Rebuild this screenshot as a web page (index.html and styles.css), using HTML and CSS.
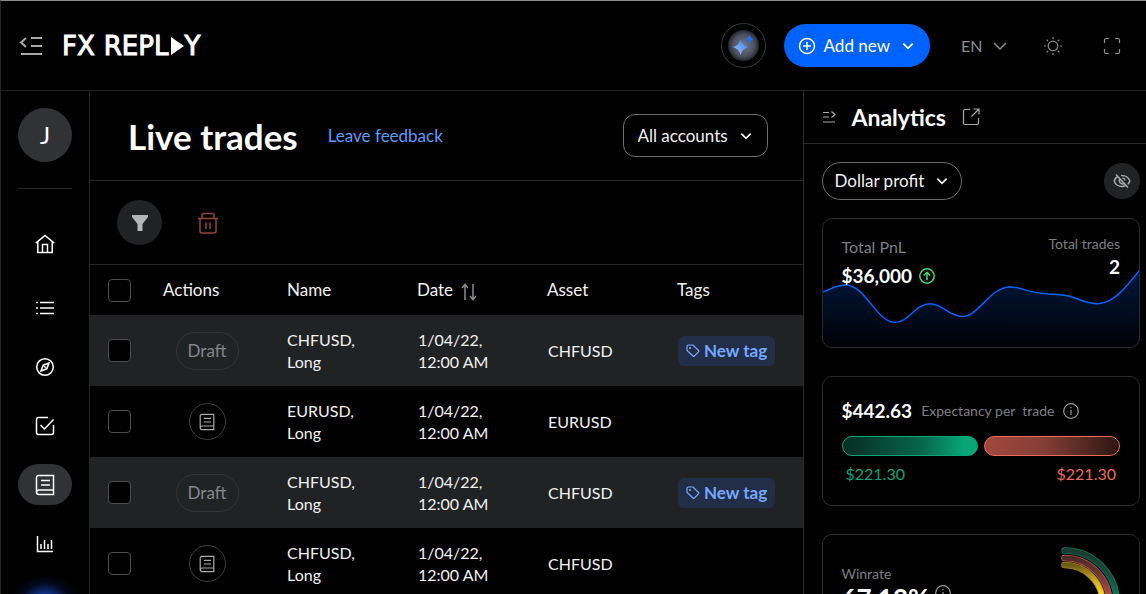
FILE: index.html
```html
<!DOCTYPE html>
<html lang="en">
<head>
    <meta charset="UTF-8">
    <meta name="viewport" content="width=device-width, initial-scale=1.0">
    <title>FX Replay - Live trades</title>
    <link rel="stylesheet" href="styles.css">
</head>
<body>
    <!-- Shared icons -->
    <svg class="sprite" aria-hidden="true">
        <symbol id="chevron" viewBox="0 0 12 12"><path d="M2 4l4 4 4-4" /></symbol>
        <symbol id="book" viewBox="0 0 20 22"><path d="M3.500 1.500h15v19H4a2.500 2.500 0 0 1-2.500-2.500V3.500a2 2 0 0 1 2-2zM1.500 18A2.500 2.500 0 0 1 4 16h14.500M6 6.500h9M6 11h9" /></symbol>
        <symbol id="tag" viewBox="0 0 14 14"><path d="M1 2.500A1.500 1.500 0 0 1 2.500 1H7l5.500 5.500a1 1 0 0 1 0 1.400L8.400 12a1 1 0 0 1-1.400 0L1 6.500z" /><circle cx="4" cy="4" r=".5" /></symbol>
        <symbol id="info" viewBox="0 0 16 16"><circle cx="8" cy="8" r="7.300" /><path d="M8 7v5M8 4v1.200" /></symbol>
    </svg>

    <div class="app">
        <header class="topbar">
            <button class="icon-btn menu-btn" aria-label="Collapse menu">
                <svg width="24" height="20" viewBox="0 0 24 20"><path d="M8 2L3 6.500l5 4.500M13 2h11M13 10h11M3 18h21" /></svg>
            </button>
            <a class="logo" href="#" aria-label="FX Replay">
                <span>FX</span>
                <span>REPL</span>
                <svg width="13" height="18" viewBox="0 0 13 18"><path d="M0 0l13 9L0 18z" /></svg>
                <span>Y</span>
            </a>
            <div class="topbar-right">
                <button class="ai-btn" aria-label="Assistant">
                    <svg width="31" height="31" viewBox="0 0 31 31">
                        <defs>
                            <radialGradient id="halo"><stop offset="0" stop-color="#737c90" /><stop offset=".7" stop-color="#4b505c" /><stop offset="1" stop-color="#23262b" /></radialGradient>
                            <linearGradient id="spark" x1="0" y1="1" x2="1" y2="0"><stop offset="0" stop-color="#a6c8ff" /><stop offset="1" stop-color="#2f7bff" /></linearGradient>
                        </defs>
                        <circle cx="15.500" cy="15.500" r="15.500" fill="url(#halo)" />
                        <path fill="url(#spark)" d="M12.500 9.500q1.500 6.500 8 7.500-6.500 1.500-8 8-1.500-6.500-8-8 6.500-1 8-7.500z" />
                        <path fill="#1f70ff" d="M21.500 4.500q.8 4 4.500 4.800-3.700.8-4.500 4.700-.8-3.900-4.500-4.700 3.700-.8 4.500-4.800z" />
                    </svg>
                </button>
                <button class="add-btn">
                    <svg width="18" height="18" viewBox="0 0 18 18"><circle cx="9" cy="9" r="7.500" /><path d="M9 5v8M5 9h8" /></svg>
                    Add new
                    <svg class="chevron" width="14" height="14"><use href="#chevron" /></svg>
                </button>
                <div class="select select-lang">
                    <select aria-label="Language"><option>EN</option></select>
                    <svg width="18" height="18"><use href="#chevron" /></svg>
                </div>
                <button class="icon-btn sun-btn" aria-label="Theme">
                    <svg width="20" height="20" viewBox="0 0 20 20"><circle cx="10" cy="10" r="4.800" /><path d="M10 1v2M10 17v2M1 10h2M17 10h2M3.600 3.600l1.400 1.400M15 15l1.400 1.400M3.600 16.400L5 15M15 5l1.400-1.400" /></svg>
                </button>
                <button class="icon-btn full-btn" aria-label="Full screen">
                    <svg width="18" height="18" viewBox="0 0 18 18"><path d="M6 1.500H3A1.500 1.500 0 0 0 1.500 3v3M12 1.500h3A1.500 1.500 0 0 1 16.500 3v3M16.500 12v3a1.500 1.500 0 0 1-1.500 1.500h-3M6 16.500H3A1.500 1.500 0 0 1 1.500 15v-3" /></svg>
                </button>
            </div>
        </header>

        <div class="content">
            <nav class="sidebar">
                <div class="avatar">J</div>
                <hr>
                <a class="home" href="#" aria-label="Home"><svg width="20" height="20" viewBox="0 0 20 20"><path d="M.8 9.200L10 1.500l9.200 7.700M2.800 8v10.500h14.400V8M7.500 18V10.500h5V18" /></svg></a>
                <a href="#" aria-label="Sessions"><svg width="20" height="20" viewBox="0 0 20 20"><path d="M5 4.500h14M5 10h14M5 15.500h14M1 4.500h2M1 10h2M1 15.500h2" /></svg></a>
                <a href="#" aria-label="Explore"><svg width="20" height="20" viewBox="0 0 20 20"><circle cx="10" cy="10" r="8.300" /><path d="M14 6l-2.200 5.800L6 14l2.200-5.800zM9.200 9.200l1.600 1.600" /></svg></a>
                <a href="#" aria-label="Tasks"><svg width="20" height="20" viewBox="0 0 20 20"><path d="M13 1.500H3.500a2 2 0 0 0-2 2v13a2 2 0 0 0 2 2h13a2 2 0 0 0 2-2V9M5.500 9l4 4L18.500 3.500" /></svg></a>
                <a class="active" href="#" aria-label="Journal"><svg width="20" height="22"><use href="#book" /></svg></a>
                <a href="#" aria-label="Statistics"><svg width="20" height="20" viewBox="0 0 20 20"><path d="M2.500 2v15.500H18M6 10v5M9.500 6v9M13 10v5M16.500 6v9" /></svg></a>
                <div class="glow"></div>
            </nav>

            <main class="trades">
                <div class="trades-head">
                    <h1>Live trades</h1>
                    <a href="#">Leave feedback</a>
                    <div class="select select-account">
                        <select aria-label="Account"><option>All accounts</option></select>
                        <svg width="14" height="14"><use href="#chevron" /></svg>
                    </div>
                </div>
                <div class="toolbar">
                    <button class="filter-btn" aria-label="Filter">
                        <svg width="18" height="18" viewBox="0 0 18 18"><path d="M1 1h16v2l-5.500 7v7h-5v-7L1 3z" /></svg>
                    </button>
                    <button class="icon-btn delete-btn" aria-label="Delete">
                        <svg width="22" height="22" viewBox="0 0 22 22"><path d="M1 6.500h20M3 6.500V19a2 2 0 0 0 2 2h12a2 2 0 0 0 2-2V6.500M5 6V3.500a2 2 0 0 1 2-2h8a2 2 0 0 1 2 2V6M9 10.500V17M13 10.500V17" /></svg>
                    </button>
                </div>
                <table>
                    <colgroup>
                        <col class="col-check">
                        <col class="col-actions">
                        <col class="col-data">
                        <col class="col-data">
                        <col class="col-data">
                        <col>
                    </colgroup>
                    <thead>
                        <tr>
                            <th><input type="checkbox" aria-label="Select all"></th>
                            <th>Actions</th>
                            <th>Name</th>
                            <th>Date <svg class="sort" width="16" height="18" viewBox="0 0 16 18"><path d="M4 17V2M1 5l3-3.500L7 5M12 1v15M9 13l3 3.500 3-3.500" /></svg></th>
                            <th>Asset</th>
                            <th>Tags</th>
                        </tr>
                    </thead>
                    <tbody>
                        <tr>
                            <td><input type="checkbox" aria-label="Select trade"></td>
                            <td><button class="draft">Draft</button></td>
                            <td>CHFUSD,<br>Long</td>
                            <td>1/04/22,<br>12:00 AM</td>
                            <td>CHFUSD</td>
                            <td><button class="tag"><svg width="14" height="14"><use href="#tag" /></svg>New tag</button></td>
                        </tr>
                        <tr>
                            <td><input type="checkbox" aria-label="Select trade"></td>
                            <td><button class="journal" aria-label="Journal"><svg width="16" height="18"><use href="#book" /></svg></button></td>
                            <td>EURUSD,<br>Long</td>
                            <td>1/04/22,<br>12:00 AM</td>
                            <td>EURUSD</td>
                            <td></td>
                        </tr>
                        <tr>
                            <td><input type="checkbox" aria-label="Select trade"></td>
                            <td><button class="draft">Draft</button></td>
                            <td>CHFUSD,<br>Long</td>
                            <td>1/04/22,<br>12:00 AM</td>
                            <td>CHFUSD</td>
                            <td><button class="tag"><svg width="14" height="14"><use href="#tag" /></svg>New tag</button></td>
                        </tr>
                        <tr>
                            <td><input type="checkbox" aria-label="Select trade"></td>
                            <td><button class="journal" aria-label="Journal"><svg width="16" height="18"><use href="#book" /></svg></button></td>
                            <td>CHFUSD,<br>Long</td>
                            <td>1/04/22,<br>12:00 AM</td>
                            <td>CHFUSD</td>
                            <td></td>
                        </tr>
                    </tbody>
                </table>
            </main>

            <aside class="analytics">
                <div class="analytics-head">
                    <button class="icon-btn" aria-label="Collapse analytics">
                        <svg width="14" height="14" viewBox="0 0 14 14"><path d="M1 2.500h6M1 7h6M1 12h12M9.500 1.500l3.500 3-3.500 3" /></svg>
                    </button>
                    <h2>Analytics</h2>
                    <a href="#" aria-label="Open analytics"><svg width="18" height="18" viewBox="0 0 18 18"><path d="M8 1.500H3A1.500 1.500 0 0 0 1.500 3v12A1.500 1.500 0 0 0 3 16.500h12a1.500 1.500 0 0 0 1.500-1.500v-5M11.500 1h5.500v5.500M17 1L9.500 8.500" /></svg></a>
                </div>
                <div class="analytics-body">
                    <div class="controls">
                        <div class="select select-profit">
                            <select aria-label="Profit unit"><option>Dollar profit</option></select>
                            <svg width="14" height="14"><use href="#chevron" /></svg>
                        </div>
                        <button class="eye-btn" aria-label="Hide values">
                            <svg width="18" height="16" viewBox="0 0 18 16"><path d="M3 1.500l12 13M5.500 3.200C3.200 4.200 1.700 6.300 1.200 8c.9 3.200 4.300 5.500 7.800 5.500 1.200 0 2.400-.3 3.400-.8M8 2.500c4.300-.3 7.800 2.200 8.800 5.500-.3 1.100-1 2.200-2 3.200M6.800 6A3.200 3.200 0 0 0 11 10.500M9.500 5a3 3 0 0 1 2.600 2.500" /></svg>
                        </button>
                    </div>

                    <section class="card pnl">
                        <svg class="chart" viewBox="0 0 316 130" preserveAspectRatio="none">
                            <defs>
                                <linearGradient id="area" x1="0" y1="0" x2="0" y2="1"><stop offset="0" stop-color="#0062ff" stop-opacity=".24" /><stop offset="1" stop-color="#0062ff" stop-opacity=".02" /></linearGradient>
                            </defs>
                            <path fill="url(#area)" d="M0 74C9 71 13 67 22 67C43 67 53 105 72 105C85 105 93 86 107 86C119 86 126 99 139 99C156 99 166 69 187 69C198 69 204 74 215 75C226 77 233 76 244 78C254 80 262 86 274 86C291 86 304 67 316 52V130H0z" />
                            <path class="line" d="M0 74C9 71 13 67 22 67C43 67 53 105 72 105C85 105 93 86 107 86C119 86 126 99 139 99C156 99 166 69 187 69C198 69 204 74 215 75C226 77 233 76 244 78C254 80 262 86 274 86C291 86 304 67 316 52" />
                        </svg>
                        <div class="stat">
                            <span class="label">Total PnL</span>
                            <strong>$36,000
                                <svg width="16" height="16" viewBox="0 0 16 16"><circle cx="8" cy="8" r="7.200" /><path d="M8 12V4.500M4.800 7.500L8 4.300l3.200 3.200" /></svg>
                            </strong>
                        </div>
                        <div class="stat stat-right">
                            <span class="label small">Total trades</span>
                            <strong>2</strong>
                        </div>
                    </section>

                    <section class="card expectancy">
                        <div class="expectancy-head">
                            <strong>$442.63</strong>
                            <span class="label small">Expectancy per &nbsp;trade</span>
                            <svg class="info" width="16" height="16"><use href="#info" /></svg>
                        </div>
                        <div class="bars">
                            <div class="bar win"></div>
                            <div class="bar loss"></div>
                        </div>
                        <div class="amounts">
                            <span class="green">$221.30</span>
                            <span class="red">$221.30</span>
                        </div>
                    </section>

                    <section class="card winrate">
                        <div>
                            <span class="label small">Winrate</span>
                            <div class="rate">
                                <strong>67.12%</strong>
                                <svg class="info" width="16" height="16"><use href="#info" /></svg>
                            </div>
                        </div>
                        <svg class="rings" width="59" height="112" viewBox="0 0 59 112">
                            <defs>
                                <linearGradient id="g1" x1="0" y1="0" x2="0" y2="1"><stop offset="0" stop-color="#183c31" /><stop offset=".25" stop-color="#174d3e" /><stop offset=".5" stop-color="#0f8765" /></linearGradient>
                                <linearGradient id="g2" x1="0" y1="0" x2="0" y2="1"><stop offset="0" stop-color="#4c2a28" /><stop offset=".25" stop-color="#773e3a" /><stop offset=".5" stop-color="#ca5549" /></linearGradient>
                                <linearGradient id="g3" x1="0" y1="0" x2="0" y2="1"><stop offset="0" stop-color="#6b5917" /><stop offset=".2" stop-color="#c9a928" /><stop offset=".4" stop-color="#ffd82c" /></linearGradient>
                            </defs>
                            <g fill="none" stroke-linecap="round">
                                <path stroke="#0f7659" stroke-width="6.500" d="M3.500 3.500A52 52 0 0 1 3.500 108" />
                                <path stroke="url(#g1)" stroke-width="5" d="M3.500 3.500A52 52 0 0 1 3.500 108" />
                                <path stroke="#b35950" stroke-width="6.500" d="M3.500 11A45 45 0 0 1 3.500 101" />
                                <path stroke="url(#g2)" stroke-width="5" d="M3.500 11A45 45 0 0 1 3.500 101" />
                                <path stroke="#a57e13" stroke-width="6.500" d="M3.500 18A38 38 0 0 1 3.500 94" />
                                <path stroke="url(#g3)" stroke-width="5" d="M3.500 18A38 38 0 0 1 3.500 94" />
                            </g>
                        </svg>
                    </section>
                </div>
            </aside>
        </div>
    </div>
</body>
</html>
```
FILE: styles.css
```css
* {
    box-sizing: border-box;
}

body {
    margin: 0;
    background-color: #000;
    color: #f2f2f2;
    font-family: Lato, "Noto Sans", sans-serif;
    font-size: 16px;
    line-height: 22px;
}

a {
    color: inherit;
    text-decoration: none;
}

button, select {
    font: inherit;
    color: inherit;
    background: none;
    border: none;
    padding: 0;
    cursor: pointer;
}

button {
    display: inline-flex;
    align-items: center;
    justify-content: center;
}

svg {
    display: block;
    flex-shrink: 0;
    fill: none;
    stroke: currentColor;
    stroke-width: 1.5;
}

h1, h2 {
    margin: 0;
    color: #fff;
}

.sprite {
    position: absolute;
    width: 0;
    height: 0;
}

.app {
    display: flex;
    flex-direction: column;
    height: 100vh;
    overflow: hidden;
    border-top: 1px solid #8c8c8c;
    border-left: 1px solid #232425;
}

/* Top bar */
.topbar {
    display: flex;
    align-items: center;
    flex-shrink: 0;
    height: 90px;
    padding: 0 25px 0 17px;
    border-bottom: 1px solid #242527;
}

.icon-btn {
    color: #8b8c90;
}

.menu-btn {
    color: #a8a9ad;
}

.menu-btn svg {
    stroke-width: 2;
}

.logo {
    display: flex;
    align-items: center;
    margin-left: 20px;
    color: #fff;
    font-family: "DejaVu Sans", sans-serif;
    font-size: 26px;
    -webkit-text-stroke: 1px #fff;
}

.logo span + span {
    margin-left: 9px;
}

.logo svg {
    fill: #fff;
    stroke: none;
    margin-left: 3px;
}

.logo svg + span {
    margin-left: 0;
}

.topbar-right {
    display: flex;
    align-items: center;
    margin-left: auto;
}

.ai-btn {
    width: 45px;
    height: 45px;
    border: 1px solid #38393b;
    border-radius: 50%;
}

.ai-btn svg {
    stroke: none;
}

.add-btn {
    gap: 8px;
    height: 43px;
    margin-left: 18px;
    padding: 0 15px 0 14px;
    border-radius: 22px;
    background-color: #0062ff;
    color: #fff;
    font-size: 17px;
}

.add-btn .chevron {
    margin-left: 3px;
}

/* Drop-downs */
.select {
    position: relative;
    font-size: 17px;
}

.select select {
    appearance: none;
    width: 100%;
    height: 100%;
}

.select svg {
    position: absolute;
    top: 50%;
    right: 15px;
    transform: translateY(-50%);
    pointer-events: none;
}

.select-lang {
    width: 48px;
    height: 30px;
    margin-left: 31px;
    color: #8b8c90;
    font-size: 16px;
}

.select-lang svg {
    right: 0;
    stroke-width: 1;
}

.select-account {
    width: 145px;
    height: 43px;
    margin-left: auto;
}

.select-account select {
    padding-left: 14px;
    border: 1px solid #6a6b70;
    border-radius: 12px;
}

.select-profit {
    width: 140px;
    height: 38px;
}

.select-profit select {
    padding-left: 12px;
    border: 1px solid #6a6b70;
    border-radius: 19px;
}

.select-profit svg {
    right: 13px;
}

.sun-btn {
    margin-left: 34px;
}

.full-btn {
    margin-left: 40px;
}

.sun-btn svg, .full-btn svg {
    stroke-width: 1.2;
}

.content {
    display: flex;
    flex: 1;
    min-height: 0;
}

/* Sidebar */
.sidebar {
    position: relative;
    display: flex;
    flex-direction: column;
    align-items: center;
    gap: 18px;
    flex-shrink: 0;
    width: 89px;
    padding: 17px 0;
    border-right: 1px solid #242527;
    overflow: hidden;
    color: #fff;
}

.avatar {
    display: flex;
    align-items: center;
    justify-content: center;
    width: 54px;
    height: 54px;
    flex-shrink: 0;
    border-radius: 50%;
    background-color: #313235;
    font-size: 24px;
}

.sidebar hr {
    width: 54px;
    margin: 8px 0 16px;
    border: none;
    border-top: 1px solid #242527;
}

.sidebar a {
    display: flex;
    align-items: center;
    justify-content: center;
    flex-shrink: 0;
    width: 54px;
    height: 41px;
    border-radius: 21px;
}

.sidebar .home {
    margin-bottom: 5px;
}

.sidebar .active {
    background-color: #313235;
}

.glow {
    position: absolute;
    left: 9px;
    bottom: -40px;
    width: 70px;
    height: 60px;
    background: radial-gradient(closest-side, #2f6dff, #0d2a75 40%, #03091c 70%, transparent);
}

/* Live trades */
.trades {
    flex: 1;
    min-width: 0;
}

.trades-head {
    display: flex;
    align-items: center;
    height: 90px;
    padding: 0 35px 0 38px;
    border-bottom: 1px solid #242527;
}

.trades-head h1 {
    font-size: 35px;
    line-height: 44px;
}

.trades-head a {
    margin-left: 30px;
    color: #5b9aff;
    font-size: 17px;
}

.toolbar {
    display: flex;
    align-items: center;
    gap: 35px;
    height: 84px;
    padding: 0 27px;
    border-bottom: 1px solid #242527;
}

.filter-btn {
    width: 45px;
    height: 45px;
    border-radius: 50%;
    background-color: #212224;
    color: #b4b5b9;
}

.filter-btn svg {
    fill: currentColor;
    stroke: none;
}

.delete-btn {
    color: #94443a;
}

table {
    width: 100%;
    table-layout: fixed;
    border-collapse: collapse;
}

.col-check {
    width: 55px;
}

.col-actions {
    width: 124px;
}

.col-data {
    width: 130px;
}

th {
    height: 50px;
    padding: 0 0 0 18px;
    font-size: 17px;
    font-weight: normal;
    text-align: left;
}

td {
    height: 71px;
    padding: 0 0 0 19px;
}

th:first-child, td:first-child, td:nth-child(3) {
    padding-left: 18px;
}

td:nth-child(2) {
    padding: 0;
    text-align: center;
}

tbody tr:nth-child(odd) {
    background-color: #212224;
}

.sort {
    display: inline-block;
    margin-left: 4px;
    vertical-align: middle;
    color: #8b8c90;
}

input[type="checkbox"] {
    appearance: none;
    display: block;
    width: 23px;
    height: 23px;
    margin: 0;
    border: 1px solid #4b4c4f;
    border-radius: 4px;
    background-color: #000;
}

.draft {
    width: 63px;
    height: 38px;
    border: 1px solid #343538;
    border-radius: 19px;
    color: #85868a;
    font-size: 17px;
}

.journal {
    width: 37px;
    height: 37px;
    border: 1px solid #3e3f42;
    border-radius: 50%;
    color: #a8a9ad;
    vertical-align: middle;
}

.tag {
    gap: 4px;
    height: 30px;
    padding: 0 8px;
    border-radius: 6px;
    background-color: #222e47;
    color: #75a9ff;
    font-size: 17px;
    font-weight: bold;
}

.tag svg {
    stroke-width: 1.2;
}

/* Analytics */
.analytics {
    flex-shrink: 0;
    width: 30%;
    border-left: 1px solid #2c2d2f;
}

.analytics-head {
    display: flex;
    align-items: center;
    gap: 16px;
    height: 53px;
    padding: 0 18px;
    border-bottom: 1px solid #2c2d2f;
}

.analytics-head svg {
    stroke-width: 1.2;
    color: #a8a9ad;
}

.analytics-head h2 {
    font-size: 23px;
}

.analytics-body {
    padding: 18px 6px 0 18px;
}

.controls {
    display: flex;
    align-items: center;
    justify-content: space-between;
    margin-bottom: 18px;
}

.eye-btn {
    width: 36px;
    height: 36px;
    border-radius: 50%;
    background-color: #212224;
    color: #a8a9ad;
}

.card {
    position: relative;
    display: flex;
    justify-content: space-between;
    min-height: 130px;
    margin-bottom: 28px;
    padding: 17px 19px;
    border: 1px solid #292a2c;
    border-radius: 10px;
    overflow: hidden;
}

.label {
    color: #7e7f83;
}

.small {
    font-size: 14px;
}

.card strong {
    color: #fff;
    font-size: 19px;
}

.chart {
    position: absolute;
    inset: 0;
    width: 100%;
    height: 100%;
    stroke: none;
}

.chart .line {
    stroke: #0062ff;
    stroke-width: 1.5;
}

.stat {
    position: relative;
    display: flex;
    flex-direction: column;
    gap: 7px;
}

.stat strong {
    display: flex;
    align-items: center;
    gap: 7px;
}

.stat strong svg {
    color: #3fd873;
}

.stat-right {
    gap: 1px;
    align-items: flex-end;
    margin-top: -3px;
}

.expectancy {
    flex-direction: column;
    justify-content: flex-start;
    padding-top: 23px;
}

.expectancy-head {
    display: flex;
    align-items: center;
    gap: 9px;
}

.info {
    color: #96979b;
    stroke-width: 1.2;
}

.bars {
    display: flex;
    gap: 6px;
    margin-top: 14px;
}

.bar {
    flex: 1;
    height: 20px;
    border-radius: 10px;
}

.win {
    border: 1px solid #08a579;
    background: linear-gradient(to right, #072c22, #07684e 60%, #08a579 90%);
}

.loss {
    border: 1px solid #ea6a5b;
    background: linear-gradient(to right, #a1483e, #843d35 45%, #2c1613);
}

.amounts {
    display: flex;
    justify-content: space-between;
    margin-top: 7px;
    padding: 0 4px;
}

.green {
    color: #08a579;
}

.red {
    color: #ea6a5b;
}

.winrate {
    padding-top: 12px;
}

.winrate .label {
    display: block;
    margin-top: 16px;
}

.rate {
    display: flex;
    gap: 6px;
}

.rate strong {
    font-size: 26px;
    line-height: 26px;
}
```
